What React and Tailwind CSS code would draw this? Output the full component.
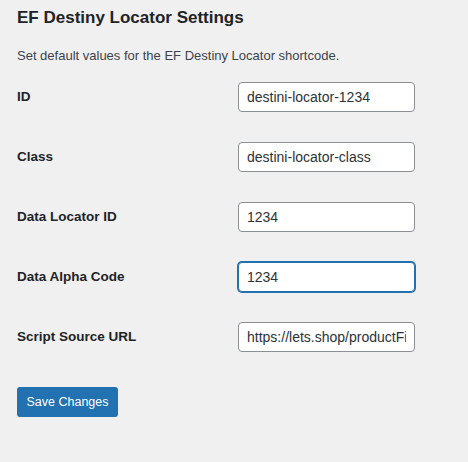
import { useState } from "react";

const fields = [
	{ label: "ID", value: "destini-locator-1234" },
	{ label: "Class", value: "destini-locator-class" },
	{ label: "Data Locator ID", value: "1234" },
	{ label: "Data Alpha Code", value: "1234", focused: true },
	{ label: "Script Source URL", value: "https://lets.shop/productFinder.js" },
];

const App = () => {
	const [values, setValues] = useState(fields.map((f) => f.value));

	return (
		<div className="min-h-[462px] w-[468px] bg-[#f0f0f1] text-[#1d2327] font-['Liberation_Sans',Arial,sans-serif] pl-[17px] pt-[5px]">
			{/* TITLE */}
			<h2 className="text-[17px] font-semibold leading-[24px] mt-[1px]">
				EF Destiny Locator Settings
			</h2>
			<p className="text-[13px] leading-[20px] mt-[16px] text-[#3c434a]">
				Set default values for the EF Destiny Locator shortcode.
			</p>

			{/* FORM ROWS */}
			<div className="mt-[1px] pr-[53px]">
				{fields.map((f, i) => (
					<div key={f.label} className="flex items-start h-[60px]">
						<label className="w-[221px] pt-[21px] text-[13.5px] font-bold leading-[18px]">
							{f.label}
						</label>
						<div className="pt-[15px]">
							<input
								type="text"
								value={values[i]}
								onChange={(e) => {
									const next = [...values];
									next[i] = e.target.value;
									setValues(next);
								}}
								className={
									f.focused
										? "w-[177px] h-[30px] rounded-[4px] bg-white px-[8px] text-[14px] text-[#2c3338] outline-none border border-[#2271b1] shadow-[0_0_0_1px_#2271b1]"
										: "w-[177px] h-[30px] rounded-[4px] bg-white px-[8px] text-[14px] text-[#2c3338] outline-none border border-[#8c8f94]"
								}
							/>
						</div>
					</div>
				))}
			</div>

			{/* SUBMIT */}
			<button className="mt-[20px] h-[30px] w-[101px] rounded-[3px] bg-[#2271b1] text-[12.5px] text-white">
				Save Changes
			</button>
		</div>
	);
};

export default App;
